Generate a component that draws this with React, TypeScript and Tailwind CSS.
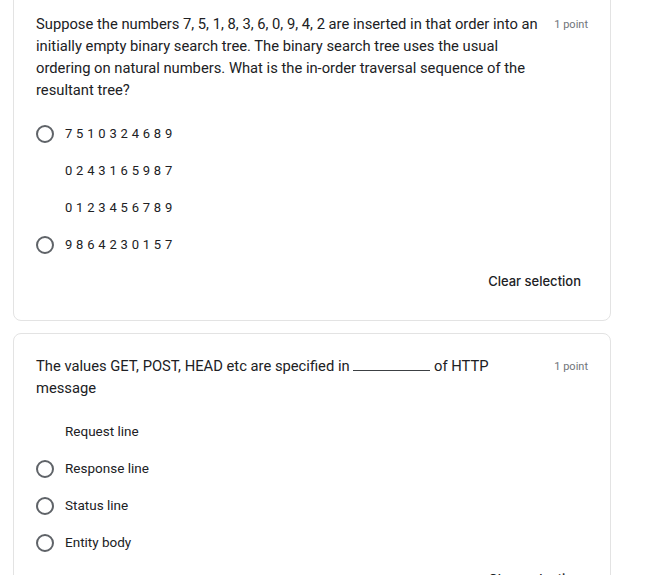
import React from "react";

function Radio() {
  return <span className="w-[18px] h-[18px] rounded-full border-2 border-[#5f6368] shrink-0 box-border" />;
}

function Option({ label, radio = true, digits = false }: { label: string; radio?: boolean; digits?: boolean }) {
  return (
    <div className="h-[37px] flex items-center">
      <div className="w-[29px] shrink-0 flex items-center">{radio ? <Radio /> : null}</div>
      <span
        className={
          digits
            ? "text-[13px] tracking-[3.8px] text-[#202124]"
            : "text-[13.5px] text-[#202124]"
        }
      >
        {label}
      </span>
    </div>
  );
}

function Card({
  question,
  options,
}: {
  question: React.ReactNode;
  options: { label: string; radio?: boolean; digits?: boolean }[];
}) {
  return (
    <div className="bg-white border border-[#e3e3e3] rounded-[8px] pt-[21px] pb-[20px] pl-[22px] pr-[22px]">
      <div className="flex items-start">
        <div className="w-[510px] text-[14.75px] leading-[22px] text-[#202124]">{question}</div>
        <div className="ml-auto pt-[2px] text-[11px] leading-[20px] text-[#70757a]">1 point</div>
      </div>
      <div className="mt-[14px] flex flex-col">
        {options.map((o) => (
          <Option key={o.label} {...o} />
        ))}
      </div>
      <div className="h-[37px] flex items-center justify-end pr-[7px]">
        <span
          className="text-[13px] font-medium text-[#202124]"
          style={{ fontFamily: "Inter, 'Open Sans', sans-serif" }}
        >
          Clear selection
        </span>
      </div>
    </div>
  );
}

export default function App() {
  return (
    <div
      className="w-[657px] h-[575px] overflow-hidden bg-white"
      style={{ fontFamily: "Roboto, 'Liberation Sans', sans-serif" }}
    >
      <div className="w-[598px] ml-[13px] -mt-[9px] flex flex-col gap-[12px]">
        <Card
          question={
            <>
              Suppose the numbers 7, 5, 1, 8, 3, 6, 0, 9, 4, 2 are inserted in that order into an
              <br />
              initially empty binary search tree. The binary search tree uses the usual
              <br />
              ordering on natural numbers. What is the in-order traversal sequence of the
              <br />
              resultant tree?
            </>
          }
          options={[
            { label: "7510324689", digits: true },
            { label: "0243165987", digits: true, radio: false },
            { label: "0123456789", digits: true, radio: false },
            { label: "9864230157", digits: true },
          ]}
        />
        <Card
          question={
            <>
              The values GET, POST, HEAD etc are specified in{" "}
              <span className="inline-block w-[77px] h-0 border-b-[1.5px] border-[#3c4043] align-baseline" />{" "}
              of HTTP
              <br />
              message
            </>
          }
          options={[
            { label: "Request line", radio: false },
            { label: "Response line" },
            { label: "Status line" },
            { label: "Entity body" },
          ]}
        />
      </div>
    </div>
  );
}
